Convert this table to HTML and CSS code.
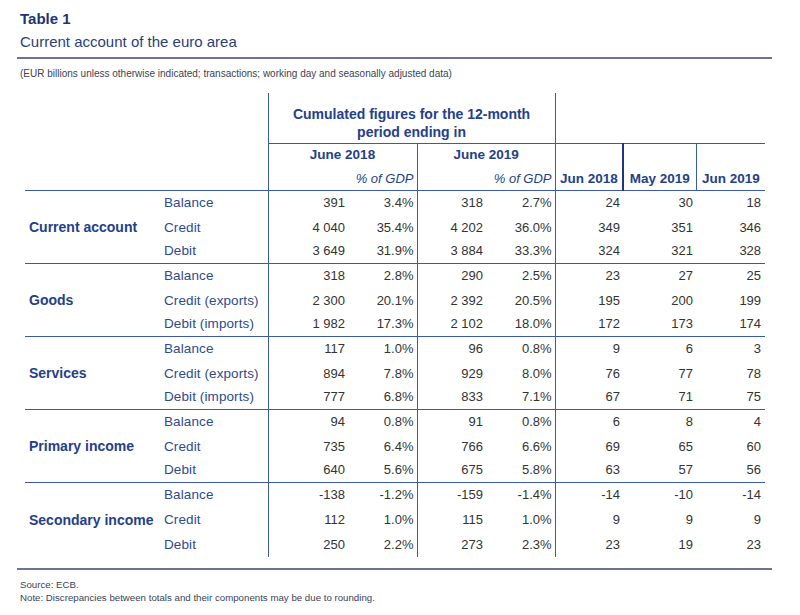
FILE: index.html
```html
<!DOCTYPE html>
<html>
<head>
<meta charset="utf-8">
<link rel="stylesheet" href="styles.css">
</head>
<body>
<div class="page">
  <div class="title">Table 1</div>
  <div class="subtitle">Current account of the euro area</div>
  <div class="rule top-rule"></div>
  <div class="note">(EUR billions unless otherwise indicated; transactions; working day and seasonally adjusted data)</div>

  <table class="tbl">
    <colgroup>
      <col class="c1"><col class="c2"><col class="c3"><col class="c4"><col class="c5"><col class="c6"><col class="c7"><col class="c8"><col class="c9">
    </colgroup>
    <thead>
      <tr class="h1">
        <th colspan="2" class="blank"></th>
        <th colspan="4" class="cum">Cumulated figures for the 12-month<br>period ending in</th>
        <th colspan="3" class="blank right"></th>
      </tr>
      <tr class="h2a">
        <th colspan="2" class="blank"></th>
        <th colspan="2" class="year vl">June 2018</th>
        <th colspan="2" class="year vl">June 2019</th>
        <th rowspan="2" class="mon vl">Jun 2018</th>
        <th rowspan="2" class="mon vthick">May 2019</th>
        <th rowspan="2" class="mon vl">Jun 2019</th>
      </tr>
      <tr class="h2b">
        <th colspan="2" class="blank"></th>
        <th class="vl"></th>
        <th class="pct">% of GDP</th>
        <th class="vl"></th>
        <th class="pct">% of GDP</th>
      </tr>
    </thead>
    <tbody>
      <tr><th rowspan="3" class="grp">Current account</th><td class="sub">Balance</td><td class="n vl">391</td><td class="p">3.4%</td><td class="n vl">318</td><td class="p">2.7%</td><td class="m vl">24</td><td class="m">30</td><td class="m">18</td></tr>
      <tr><td class="sub">Credit</td><td class="n vl">4 040</td><td class="p">35.4%</td><td class="n vl">4 202</td><td class="p">36.0%</td><td class="m vl">349</td><td class="m">351</td><td class="m">346</td></tr>
      <tr><td class="sub">Debit</td><td class="n vl">3 649</td><td class="p">31.9%</td><td class="n vl">3 884</td><td class="p">33.3%</td><td class="m vl">324</td><td class="m">321</td><td class="m">328</td></tr>
    </tbody>
    <tbody>
      <tr><th rowspan="3" class="grp">Goods</th><td class="sub">Balance</td><td class="n vl">318</td><td class="p">2.8%</td><td class="n vl">290</td><td class="p">2.5%</td><td class="m vl">23</td><td class="m">27</td><td class="m">25</td></tr>
      <tr><td class="sub">Credit (exports)</td><td class="n vl">2 300</td><td class="p">20.1%</td><td class="n vl">2 392</td><td class="p">20.5%</td><td class="m vl">195</td><td class="m">200</td><td class="m">199</td></tr>
      <tr><td class="sub">Debit (imports)</td><td class="n vl">1 982</td><td class="p">17.3%</td><td class="n vl">2 102</td><td class="p">18.0%</td><td class="m vl">172</td><td class="m">173</td><td class="m">174</td></tr>
    </tbody>
    <tbody>
      <tr><th rowspan="3" class="grp">Services</th><td class="sub">Balance</td><td class="n vl">117</td><td class="p">1.0%</td><td class="n vl">96</td><td class="p">0.8%</td><td class="m vl">9</td><td class="m">6</td><td class="m">3</td></tr>
      <tr><td class="sub">Credit (exports)</td><td class="n vl">894</td><td class="p">7.8%</td><td class="n vl">929</td><td class="p">8.0%</td><td class="m vl">76</td><td class="m">77</td><td class="m">78</td></tr>
      <tr><td class="sub">Debit (imports)</td><td class="n vl">777</td><td class="p">6.8%</td><td class="n vl">833</td><td class="p">7.1%</td><td class="m vl">67</td><td class="m">71</td><td class="m">75</td></tr>
    </tbody>
    <tbody>
      <tr><th rowspan="3" class="grp">Primary income</th><td class="sub">Balance</td><td class="n vl">94</td><td class="p">0.8%</td><td class="n vl">91</td><td class="p">0.8%</td><td class="m vl">6</td><td class="m">8</td><td class="m">4</td></tr>
      <tr><td class="sub">Credit</td><td class="n vl">735</td><td class="p">6.4%</td><td class="n vl">766</td><td class="p">6.6%</td><td class="m vl">69</td><td class="m">65</td><td class="m">60</td></tr>
      <tr><td class="sub">Debit</td><td class="n vl">640</td><td class="p">5.6%</td><td class="n vl">675</td><td class="p">5.8%</td><td class="m vl">63</td><td class="m">57</td><td class="m">56</td></tr>
    </tbody>
    <tbody class="last">
      <tr><th rowspan="3" class="grp">Secondary income</th><td class="sub">Balance</td><td class="n vl">-138</td><td class="p">-1.2%</td><td class="n vl">-159</td><td class="p">-1.4%</td><td class="m vl">-14</td><td class="m">-10</td><td class="m">-14</td></tr>
      <tr><td class="sub">Credit</td><td class="n vl">112</td><td class="p">1.0%</td><td class="n vl">115</td><td class="p">1.0%</td><td class="m vl">9</td><td class="m">9</td><td class="m">9</td></tr>
      <tr><td class="sub">Debit</td><td class="n vl">250</td><td class="p">2.2%</td><td class="n vl">273</td><td class="p">2.3%</td><td class="m vl">23</td><td class="m">19</td><td class="m">23</td></tr>
    </tbody>
  </table>

  <div class="rule bottom-rule"></div>
  <div class="footer">
    <div>Source: ECB.</div>
    <div>Note: Discrepancies between totals and their components may be due to rounding.</div>
  </div>
</div>
</body>
</html>
```
FILE: styles.css
```css
html, body {
  margin: 0;
  padding: 0;
  background: #ffffff;
}
body {
  font-family: "Liberation Sans", Arial, sans-serif;
  color: #333333;
}
.page {
  width: 800px;
  height: 615px;
  position: relative;
  overflow: hidden;
}
.title {
  margin: 10px 0 0 20px;
  font-size: 15px;
  font-weight: bold;
  color: #1d3572;
  line-height: 18px;
}
.subtitle {
  margin: 5px 0 0 20px;
  font-size: 15px;
  color: #2a3f78;
  line-height: 18px;
}
.rule {
  height: 2px;
  background: #6d7393;
  margin-left: 17px;
  width: 755px;
}
.top-rule {
  margin-top: 6px;
}
.note {
  margin: 9px 0 0 20px;
  font-size: 10px;
  line-height: 12px;
  color: #3b3f55;
}
.tbl {
  margin: 13px 0 0 25px;
  width: 740px;
  border-collapse: collapse;
  table-layout: fixed;
  font-size: 13px;
}
.c1 { width: 138px; }
.c2 { width: 105px; }
.c3 { width: 82px; }
.c4 { width: 67px; }
.c5 { width: 70px; }
.c6 { width: 68px; }
.c7 { width: 68px; }
.c8 { width: 73px; }
.c9 { width: 69px; }

.tbl th, .tbl td {
  padding: 0;
  white-space: nowrap;
}
.tbl thead th {
  color: #24408a;
  font-weight: bold;
  font-size: 13.5px;
}
.h1 { height: 50px; }
.h2a { height: 24px; }
.h2b { height: 23px; }
.tbl thead th.cum {
  border-left: 1px solid #3d5aa8;
  border-right: 1px solid #3d5aa8;
  border-bottom: 1px solid #3d5aa8;
  vertical-align: bottom;
  padding-bottom: 2px;
  line-height: 18px;
  text-align: center;
  font-size: 14px;
}
.h1 .right {
  border-bottom: 1px solid #3d5aa8;
}
.year {
  text-align: center;
  vertical-align: middle;
  line-height: 16px;
}
.vl { border-left: 1px solid #3d5aa8; }
.vthick { border-left: 2px solid #22357a; }
.mon {
  vertical-align: bottom;
  text-align: center;
  line-height: 16px;
  padding-bottom: 3px !important;
}
.h2b th { vertical-align: bottom; padding-bottom: 3px !important; }
.tbl thead th.pct {
  font-style: italic;
  font-weight: normal;
  font-size: 13px;
  text-align: right;
  padding-right: 3px;
  line-height: 16px;
}
.h2b th, .h2a .mon {
  border-bottom: 1px solid #3d5aa8;
}

.tbl tbody tr { height: 24px; }
.tbl tbody tr:first-child { height: 25px; }
.tbl tbody.last tr:last-child { height: 26px; }
.tbl tbody tr:first-child th,
.tbl tbody tr:first-child td {
  border-top: 1px solid #3d5aa8;
}
.grp {
  text-align: left;
  padding-left: 4px !important;
  color: #24408a;
  font-weight: bold;
  font-size: 14px;
  vertical-align: middle;
}
.sub {
  color: #2e4a8f;
  padding-left: 1px !important;
  font-size: 13.5px;
  letter-spacing: 0.1px;
}
.n { text-align: right; padding-right: 5px !important; }
.p { text-align: right; padding-right: 3px !important; }
.tbl td.n:nth-child(5), .tbl tr:not(:first-child) td.n:nth-child(4) { padding-right: 4px !important; }
.m { text-align: right; padding-right: 3px !important; }
.tbl td.m:last-child { padding-right: 4px !important; }

.bottom-rule {
  margin-top: 11px;
}
.footer {
  margin: 8px 0 0 20px;
  font-size: 9.7px;
  line-height: 13px;
  color: #3b3f55;
}
```
